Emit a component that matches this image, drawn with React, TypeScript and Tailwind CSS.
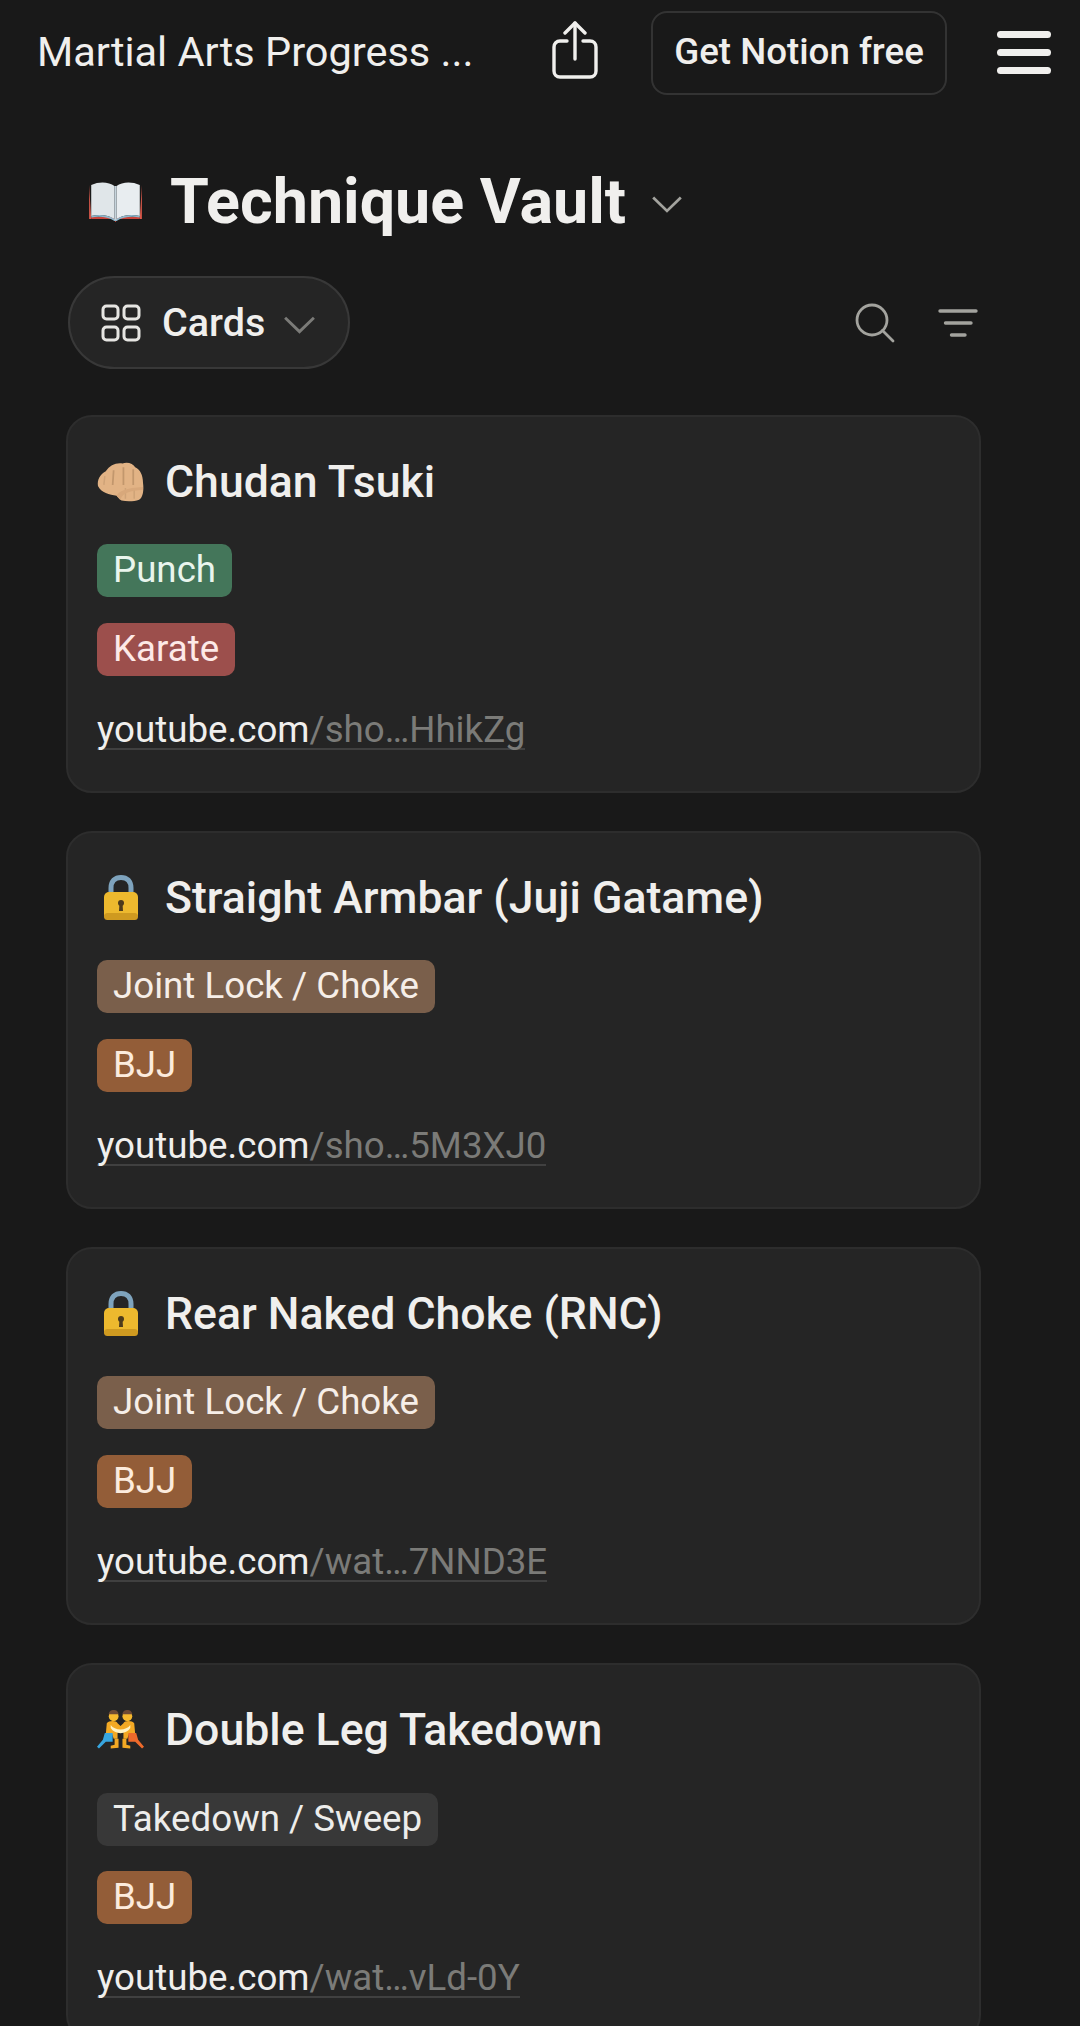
const F = "font-['Roboto',sans-serif]";

function Book() {
  return (
    <svg width="57" height="44" viewBox="0 0 54 44" preserveAspectRatio="none" className="block">
      <path d="M2 5 L2 39 L25 39 L27 42 L29 39 L52 39 L52 5 L50 39 L4 39 Z" fill="#d9584a" />
      <path d="M4 37 L25 37 L27 41 L29 37 L50 37 L50 39 L29 39 L27 42 L25 39 L4 39 Z" fill="#c8443a" />
      <path d="M4 5 C12 1 21 2 26 6 L26 39 C20 35 12 34 4 36 Z" fill="#e0e6e9" />
      <path d="M50 5 C42 1 33 2 28 6 L28 39 C34 35 42 34 50 36 Z" fill="#e8edf0" />
      <path d="M4 36 C12 34 20 35 26 39 L28 39 C34 35 42 34 50 36 L50 37.500 C42 36 34 37 28 41 L26 41 C20 37 12 36 4 37.500 Z" fill="#8fb8cc" />
      <path d="M26 6 L28 6 L28 40 L26 40 Z" fill="#c6d4dc" />
    </svg>
  );
}

function Fist() {
  return (
    <svg width="48" height="42" viewBox="0 0 48 42" className="block">
      <path d="M1 25 C0 19 3 13 9 10 C13 4 19 1 26 2 C31 0 37 2 39 6 C44 8 47 14 47 22 C48 29 47 37 43 39 C38 41 31 41 25 40 C22 38 21 36 20 35 C13 34 4 32 1 25 Z" fill="#e2b385" />
      <path d="M17 9 L16 24 M27 6 L27 24 M37 8 L37 24" stroke="#c2976d" strokeWidth="1.800" fill="none" />
      <path d="M8 15 L7 24 M29 27 L29 38 M38 27 L38 38" stroke="#cfa378" strokeWidth="1.500" fill="none" />
      <path d="M20 35 C22 30 30 27 47 26 L47 29 C34 30 26 32 24 39 Z" fill="#d8a87b" />
    </svg>
  );
}

function Lock() {
  return (
    <svg width="36" height="46" viewBox="0 0 36 46" className="block">
      <path d="M8 20 L8 13 C8 6 12 2.500 18 2.500 C24 2.500 28 6 28 13 L28 20" fill="none" stroke="#7ea3bd" strokeWidth="5" />
      <rect x="1" y="17" width="34" height="28" rx="5" fill="#edb92e" />
      <rect x="1" y="38" width="34" height="7" rx="3.500" fill="#cf9a20" />
      <circle cx="18" cy="28" r="3" fill="#4c3a1c" />
      <path d="M16.500 28 L19.500 28 L20 36 L16 36 Z" fill="#4c3a1c" />
    </svg>
  );
}

function Wrestlers() {
  return (
    <svg width="48" height="42" viewBox="0 0 48 42" className="block">
      <circle cx="17" cy="7" r="5" fill="#f6b92e" />
      <circle cx="31" cy="7" r="5" fill="#f6b92e" />
      <path d="M12 5 C12 -1 22 -1 22 5 Z M26 5 C26 -1 36 -1 36 5 Z" fill="#6e4a34" />
      <path d="M10 14 C12 11 20 11 21 14 L24 17 L27 14 C28 11 36 11 38 14 L39 25 L33 24 L31 30 L27 30 L27 22 L21 22 L21 30 L17 30 L15 24 L9 25 Z" fill="#f3a924" />
      <path d="M14 16 C18 22 30 22 34 16 L34 19 C30 26 18 26 14 19 Z" fill="#fff3c4" />
      <path d="M8 24 L16 24 L16 33 L9 33 L2 40 L0 38 L6 31 Z" fill="#37a6e0" />
      <path d="M40 24 L32 24 L32 33 L39 33 L46 40 L48 38 L42 31 Z" fill="#ef6a2b" />
      <path d="M18 30 L22 30 L22 39 L14 40 L14 37 L18 36 Z" fill="#f3a924" />
      <path d="M30 30 L26 30 L26 39 L34 40 L34 37 L30 36 Z" fill="#f3a924" />
    </svg>
  );
}

function Chevron({ className }: { className: string }) {
  return (
    <svg viewBox="0 0 28 16" fill="none" stroke="currentColor" strokeWidth="2.600" className={className}>
      <path d="M1 1.500 L14 14 L27 1.500" />
    </svg>
  );
}

function Tag({ label, color, text }: { label: string; color: string; text: string }) {
  return (
    <div className={`self-start h-[53px] px-4 rounded-[10px] flex items-center text-[36.700px] leading-none ${color} ${text}`}>
      {label}
    </div>
  );
}

const tags = {
  punch: { label: "Punch", color: "bg-[#44765a]", text: "text-[#e9f5ed]" },
  karate: { label: "Karate", color: "bg-[#9c4f4c]", text: "text-[#fde9e7]" },
  joint: { label: "Joint Lock / Choke", color: "bg-[#7a5f4b]", text: "text-[#f6eee8]" },
  bjj: { label: "BJJ", color: "bg-[#935d38]", text: "text-[#fcebdd]" },
  takedown: { label: "Takedown / Sweep", color: "bg-[#383838] translate-y-px", text: "text-[#ededeb]" },
};

function Card({
  icon,
  title,
  a,
  b,
  url,
}: {
  icon: React.ReactNode;
  title: string;
  a: { label: string; color: string; text: string };
  b: { label: string; color: string; text: string };
  url: string;
}) {
  return (
    <div className="h-[378px] shrink-0 rounded-[26px] border-2 border-[#2d2d2d] bg-[#252525] px-[29px] pt-[36px] flex flex-col">
      <div className="h-[58px] flex items-center">
        <div className="w-[47px] flex justify-center">{icon}</div>
        <div className="ml-[21px] text-[44.600px] leading-none font-medium text-[#f0efed] whitespace-nowrap">{title}</div>
      </div>
      <div className="mt-[33px] flex flex-col gap-[26px]">
        <Tag {...a} />
        <Tag {...b} />
      </div>
      <div className="mt-[30px] self-start h-[44px] text-[36.700px] leading-[47px] border-b-2 border-[#404040] whitespace-nowrap">
        <span className="text-[#f0efed]">youtube.com</span>
        <span className="text-[#7b7b78]">{url}</span>
      </div>
    </div>
  );
}

export default function App() {
  return (
    <div className={`${F} w-[1080px] h-[2026px] overflow-hidden bg-[#191919] flex flex-col`}>
      <header className="h-[104px] shrink-0 flex items-center pl-[37px] pr-[29px]">
        <div className="w-[438px] text-[41.500px] leading-none text-[#f0efed] whitespace-nowrap">Martial Arts Progress ...</div>
        <svg width="46" height="58" viewBox="0 0 46 58" fill="none" stroke="#f0efed" strokeWidth="3.400" strokeLinecap="round" strokeLinejoin="round" className="ml-[77px] shrink-0 -mt-1">
          <path d="M23 2 L23 38" />
          <path d="M13 12 L23 2 L33 12" />
          <path d="M15 20 L8 20 C4.500 20 2 22.500 2 26 L2 50 C2 53.500 4.500 56 8 56 L38 56 C41.500 56 44 53.500 44 50 L44 26 C44 22.500 41.500 20 38 20 L31 20" />
        </svg>
        <div className="ml-[53px] mt-px h-[84px] w-[296px] shrink-0 rounded-[16px] border-2 border-[#333333] flex items-center justify-center text-[36.700px] leading-none font-medium text-[#f0efed] whitespace-nowrap">
          Get Notion free
        </div>
        <div className="ml-auto w-[54px] flex flex-col gap-[11px]">
          <div className="h-[7px] rounded-full bg-[#f0efed]" />
          <div className="h-[7px] rounded-full bg-[#f0efed]" />
          <div className="h-[7px] rounded-full bg-[#f0efed]" />
        </div>
      </header>

      <div className="mt-[68px] h-[60px] shrink-0 flex items-center pl-[87px]">
        <Book />
        <div className="ml-[26px] text-[62.800px] leading-none font-bold text-[#f0efed] whitespace-nowrap">Technique Vault</div>
        <Chevron className="ml-[26px] mt-1 w-[30px] h-[17px] text-[#a3a39e]" />
      </div>

      <div className="mt-[44px] h-[93px] shrink-0 flex items-center pl-[68px] pr-[102px]">
        <div className="h-[93px] w-[282px] rounded-full border-2 border-[#383838] bg-[#252525] flex items-center pl-[31px]">
          <svg width="40" height="38" viewBox="0 0 40 38" fill="none" stroke="#e6e5e2" strokeWidth="3" className="shrink-0">
            <rect x="2" y="2" width="15" height="13" rx="3.500" />
            <rect x="23" y="2" width="15" height="13" rx="3.500" />
            <rect x="2" y="23" width="15" height="13" rx="3.500" />
            <rect x="23" y="23" width="15" height="13" rx="3.500" />
          </svg>
          <div className="ml-[21px] text-[39.500px] leading-none font-medium text-[#f0efed]">Cards</div>
          <Chevron className="ml-[19px] mt-1 w-[31px] h-[18px] text-[#7b7b78]" />
        </div>
        <svg width="40" height="40" viewBox="0 0 40 40" fill="none" stroke="#a3a39e" strokeWidth="2.800" strokeLinecap="round" className="ml-auto shrink-0 -translate-x-px">
          <circle cx="17" cy="17" r="15" />
          <path d="M27.500 27.500 L38 38" />
        </svg>
        <svg width="40" height="30" viewBox="0 0 40 30" fill="none" stroke="#a3a39e" strokeWidth="3.400" strokeLinecap="round" className="ml-[42px] shrink-0">
          <path d="M2 3 L38 3 M7.500 15 L33 15 M13.500 27 L27 27" />
        </svg>
      </div>

      <main className="mt-[46px] pl-[66px] pr-[99px] flex flex-col gap-[38px]">
        <Card icon={<Fist />} title="Chudan Tsuki" a={tags.punch} b={tags.karate} url="/sho…HhikZg" />
        <Card icon={<Lock />} title="Straight Armbar (Juji Gatame)" a={tags.joint} b={tags.bjj} url="/sho…5M3XJ0" />
        <Card icon={<Lock />} title="Rear Naked Choke (RNC)" a={tags.joint} b={tags.bjj} url="/wat…7NND3E" />
        <Card icon={<Wrestlers />} title="Double Leg Takedown" a={tags.takedown} b={tags.bjj} url="/wat…vLd-0Y" />
      </main>
    </div>
  );
}
